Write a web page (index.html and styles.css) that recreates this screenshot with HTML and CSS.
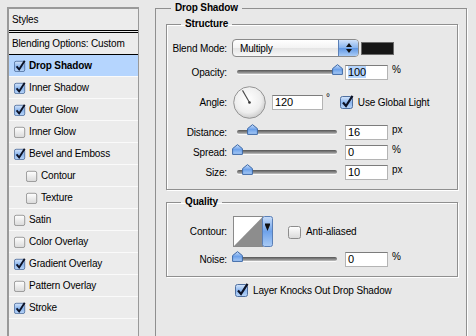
FILE: index.html
```html
<!DOCTYPE html>
<html lang="en">
  <head>
    <meta charset="UTF-8" />
    <meta name="viewport" content="width=device-width, initial-scale=1.0" />
    <link rel="stylesheet" href="styles.css">
    <title>Layer Style</title>
  </head>
  <body>
    <svg class="defs" width="0" height="0">
      <defs>
        <linearGradient id="g-off" x1="0" y1="0" x2="0" y2="1">
          <stop offset="0" stop-color="#ffffff" />
          <stop offset="1" stop-color="#d9d9d9" />
        </linearGradient>
        <linearGradient id="g-on" x1="0" y1="0" x2="0" y2="1">
          <stop offset="0" stop-color="#d6e6fb" />
          <stop offset="0.5" stop-color="#8cb6ee" />
          <stop offset="1" stop-color="#b9d5f8" />
        </linearGradient>
        <linearGradient id="g-blue" x1="0" y1="0" x2="0" y2="1">
          <stop offset="0" stop-color="#c9ddf8" />
          <stop offset="0.5" stop-color="#6ea2ea" />
          <stop offset="1" stop-color="#a9cbf6" />
        </linearGradient>
        <radialGradient id="g-dial" cx="0.45" cy="0.4" r="0.6">
          <stop offset="0" stop-color="#ffffff" />
          <stop offset="0.7" stop-color="#eeeeee" />
          <stop offset="1" stop-color="#cdcdcd" />
        </radialGradient>
        <symbol id="cb-off" viewBox="0 0 14 14">
          <rect x="0.5" y="1.5" width="12" height="12" rx="2" fill="url(#g-off)" stroke="#8c8c8c" />
        </symbol>
        <symbol id="cb-on" viewBox="0 0 14 14">
          <rect x="0.5" y="1.5" width="12" height="12" rx="2" fill="url(#g-on)" stroke="#4f6f9f" />
          <path d="M3 7.5 L6 11 L12.5 0.8" fill="none" stroke="#0c1226" stroke-width="2.2" />
        </symbol>
        <symbol id="thumb" viewBox="0 0 11 11">
          <path d="M5.5 0.6 L10.4 4.6 V10.4 H0.6 V4.6 Z" fill="url(#g-blue)" stroke="#3d68a6" stroke-linejoin="round" />
        </symbol>
      </defs>
    </svg>

    <div class="dialog">
      <ul class="styles">
        <li class="head">Styles</li>
        <li class="blending">Blending Options: Custom</li>
        <li class="item selected"><svg class="cb"><use href="#cb-on" /></svg>Drop Shadow</li>
        <li class="item"><svg class="cb"><use href="#cb-on" /></svg>Inner Shadow</li>
        <li class="item"><svg class="cb"><use href="#cb-on" /></svg>Outer Glow</li>
        <li class="item"><svg class="cb"><use href="#cb-off" /></svg>Inner Glow</li>
        <li class="item"><svg class="cb"><use href="#cb-on" /></svg>Bevel and Emboss</li>
        <li class="item sub"><svg class="cb"><use href="#cb-off" /></svg>Contour</li>
        <li class="item sub"><svg class="cb"><use href="#cb-off" /></svg>Texture</li>
        <li class="item"><svg class="cb"><use href="#cb-off" /></svg>Satin</li>
        <li class="item"><svg class="cb"><use href="#cb-off" /></svg>Color Overlay</li>
        <li class="item"><svg class="cb"><use href="#cb-on" /></svg>Gradient Overlay</li>
        <li class="item"><svg class="cb"><use href="#cb-off" /></svg>Pattern Overlay</li>
        <li class="item"><svg class="cb"><use href="#cb-on" /></svg>Stroke</li>
      </ul>

      <fieldset class="panel">
        <legend>Drop Shadow</legend>

        <fieldset class="group structure">
          <legend>Structure</legend>

          <div class="row r-blend">
            <span class="label">Blend Mode:</span>
            <div class="popup">
              <span class="popup-text">Multiply</span>
              <span class="popup-arrows">
                <svg width="8" height="12" viewBox="0 0 8 12">
                  <path d="M4 1 L7 5 H1 Z M4 11 L7 7 H1 Z" fill="#111" />
                </svg>
              </span>
            </div>
            <span class="swatch"></span>
          </div>

          <div class="row r-opacity">
            <span class="label">Opacity:</span>
            <div class="slider">
              <div class="track">
                <svg class="thumb" style="left: 100%"><use href="#thumb" /></svg>
              </div>
            </div>
            <div class="field"><span class="hilite">100</span></div>
            <span class="unit">%</span>
          </div>

          <div class="row r-angle">
            <span class="label">Angle:</span>
            <svg class="dial" width="33" height="33" viewBox="0 0 33 33">
              <circle cx="16.5" cy="16.5" r="15.8" fill="url(#g-dial)" stroke="#949494" />
              <line x1="16.5" y1="16.5" x2="9.5" y2="4.4" stroke="#4a4a4a" stroke-width="1.1" />
              <circle cx="16.5" cy="16.5" r="1.3" fill="#333" />
            </svg>
            <div class="field wide">120</div>
            <span class="unit deg">°</span>
            <svg class="cb big"><use href="#cb-on" /></svg>
            <span class="cb-text">Use Global Light</span>
          </div>

          <div class="row r-distance">
            <span class="label">Distance:</span>
            <div class="slider">
              <div class="track">
                <svg class="thumb" style="left: 15%"><use href="#thumb" /></svg>
              </div>
            </div>
            <div class="field">16</div>
            <span class="unit">px</span>
          </div>

          <div class="row">
            <span class="label">Spread:</span>
            <div class="slider">
              <div class="track">
                <svg class="thumb" style="left: 0%"><use href="#thumb" /></svg>
              </div>
            </div>
            <div class="field">0</div>
            <span class="unit">%</span>
          </div>

          <div class="row">
            <span class="label">Size:</span>
            <div class="slider">
              <div class="track">
                <svg class="thumb" style="left: 10%"><use href="#thumb" /></svg>
              </div>
            </div>
            <div class="field">10</div>
            <span class="unit">px</span>
          </div>
        </fieldset>

        <fieldset class="group quality">
          <legend>Quality</legend>

          <div class="row r-contour">
            <span class="label">Contour:</span>
            <svg class="contour" width="40" height="31" viewBox="0 0 40 31">
              <rect x="0.5" y="0.5" width="29" height="30" fill="#fff" stroke="#8a8a8a" />
              <path d="M1 30 L29.5 1 V30 Z" fill="#8d8d8d" />
              <rect x="29.5" y="0.5" width="10" height="30" rx="2" fill="url(#g-blue)" stroke="#5a7fb6" />
              <path d="M32 9 H37 L34.5 15 Z" fill="#111" />
              <rect x="32" y="7.5" width="5" height="1.5" fill="#111" />
            </svg>
            <svg class="cb big aa"><use href="#cb-off" /></svg>
            <span class="cb-text">Anti-aliased</span>
          </div>

          <div class="row r-noise">
            <span class="label">Noise:</span>
            <div class="slider">
              <div class="track">
                <svg class="thumb" style="left: 0%"><use href="#thumb" /></svg>
              </div>
            </div>
            <div class="field">0</div>
            <span class="unit">%</span>
          </div>
        </fieldset>

        <div class="knockout">
          <svg class="cb big"><use href="#cb-on" /></svg>
          <span class="cb-text">Layer Knocks Out Drop Shadow</span>
        </div>
      </fieldset>
    </div>
  </body>
</html>
```

FILE: styles.css
```css
:root {
  --bg: #e8e8e8;
  --list-bg: #ececec;
  --line: #8f8f8f;
  --select: #b5d5fe;
}

body {
  margin: 0;
  background: var(--bg);
  font-family: "Liberation Sans", Arial, sans-serif;
  font-size: 10px;
  letter-spacing: -0.15px;
  color: #000;
  overflow: hidden;
}

.defs {
  display: block;
  width: 0;
  height: 0;
}

.dialog {
  display: flex;
  align-items: flex-start;
  gap: 16px;
  height: 336px;
  overflow: hidden;
  padding-left: 7px;
}

/* styles list */
.styles {
  list-style: none;
  margin: 7px 0 0;
  padding: 0;
  width: 132px;
  height: 340px;
  box-sizing: border-box;
  border: 2px solid #999;
  border-right-width: 1px;
  background: var(--list-bg);
}

.styles li {
  display: flex;
  align-items: center;
  height: 21px;
  border-bottom: 1px solid #fafafa;
  padding-left: 3px;
}

.styles .head {
  border-bottom: 3px double #000;
}

.styles .blending {
  border-bottom: 1px solid #000;
}

.styles .item {
  padding-left: 5px;
}

.styles .item.sub {
  padding-left: 17px;
}

.styles .selected {
  background: var(--select);
  font-weight: bold;
}

.cb {
  width: 12px;
  height: 12px;
  margin-right: 3px;
  flex: none;
}

.cb.big {
  width: 14px;
  height: 14px;
  margin-right: 4px;
}

/* right panel */
fieldset {
  margin: 0;
  min-width: 0;
}

legend {
  font-weight: bold;
  line-height: 14px;
  padding: 0 4px;
}

.panel {
  margin-top: 1px;
  width: 312px;
  height: 360px;
  box-sizing: border-box;
  padding: 2px 8px 0 10px;
  border: 1px solid var(--line);
  box-shadow: 1px 1px 0 #fff;
}

.panel > legend {
  margin-left: 5px;
}

.group {
  padding: 0 0 7px;
  border: 1px solid var(--line);
  box-shadow: 1px 1px 0 #fff, inset 1px 1px 0 #fff;
}

.group > legend {
  margin-left: 14px;
}

.quality {
  margin-top: 5px;
}

.row {
  display: flex;
  align-items: center;
  height: 20px;
}

.r-blend {
  margin-top: 7px;
}

.r-opacity {
  margin-top: 4px;
}

.r-angle {
  height: 36px;
  margin-top: 2px;
}

.r-distance {
  margin-top: 2px;
}

.r-contour {
  height: 31px;
  margin-top: 7px;
}

.r-noise {
  margin-top: 2px;
}

.label {
  width: 60px;
  flex: none;
  text-align: right;
}

/* popup menu */
.popup {
  display: flex;
  justify-content: space-between;
  width: 127px;
  height: 18px;
  margin-left: 5px;
  box-sizing: border-box;
  border: 1px solid #8a8a8a;
  border-radius: 4px;
  overflow: hidden;
  background: linear-gradient(#ffffff, #f3f3f3 50%, #e4e4e4 51%, #f7f7f7);
}

.popup-text {
  align-self: center;
  padding-left: 7px;
}

.popup-arrows {
  display: flex;
  align-items: center;
  justify-content: center;
  width: 19px;
  border-left: 1px solid #5a7fb6;
  background: linear-gradient(#cfe1f9, #86b3ee 50%, #5f97e4 51%, #a9cbf6);
}

.swatch {
  width: 33px;
  height: 13px;
  margin-left: 2px;
  box-sizing: border-box;
  border: 1px solid #6a6a6a;
  background: #161616;
}

/* sliders */
.slider {
  display: flex;
  align-items: center;
  width: 110px;
  margin-left: 5px;
  padding: 0 5px;
  box-sizing: border-box;
}

.track {
  position: relative;
  width: 100%;
  height: 4px;
  border-radius: 2px;
  background: linear-gradient(#555, #8c8c8c 60%, #c4c4c4);
  box-shadow: 0 1px 0 #fafafa;
}

.thumb {
  position: absolute;
  bottom: -1px;
  width: 11px;
  height: 11px;
  margin-left: -5.5px;
}

/* number fields */
.field {
  width: 43px;
  height: 15px;
  margin-left: 3px;
  box-sizing: border-box;
  padding-left: 2px;
  border: 1px solid #b4b4b4;
  border-top-color: #7c7c7c;
  background: #fff;
  font-size: 11px;
  line-height: 13px;
}

.field.wide {
  width: 51px;
  margin-left: 6px;
}

.hilite {
  background: var(--select);
}

.unit {
  margin-left: 4px;
  align-self: flex-start;
  margin-top: 2px;
}

.unit.deg {
  margin-left: 3px;
  margin-right: 10px;
  margin-top: 8px;
}

.dial {
  margin-left: 6px;
}

.contour {
  margin-left: 6px;
  margin-right: 15px;
}

.cb-text {
  white-space: nowrap;
}

.knockout {
  display: flex;
  align-items: center;
  height: 18px;
  margin-top: 4px;
  padding-left: 69px;
}
```
